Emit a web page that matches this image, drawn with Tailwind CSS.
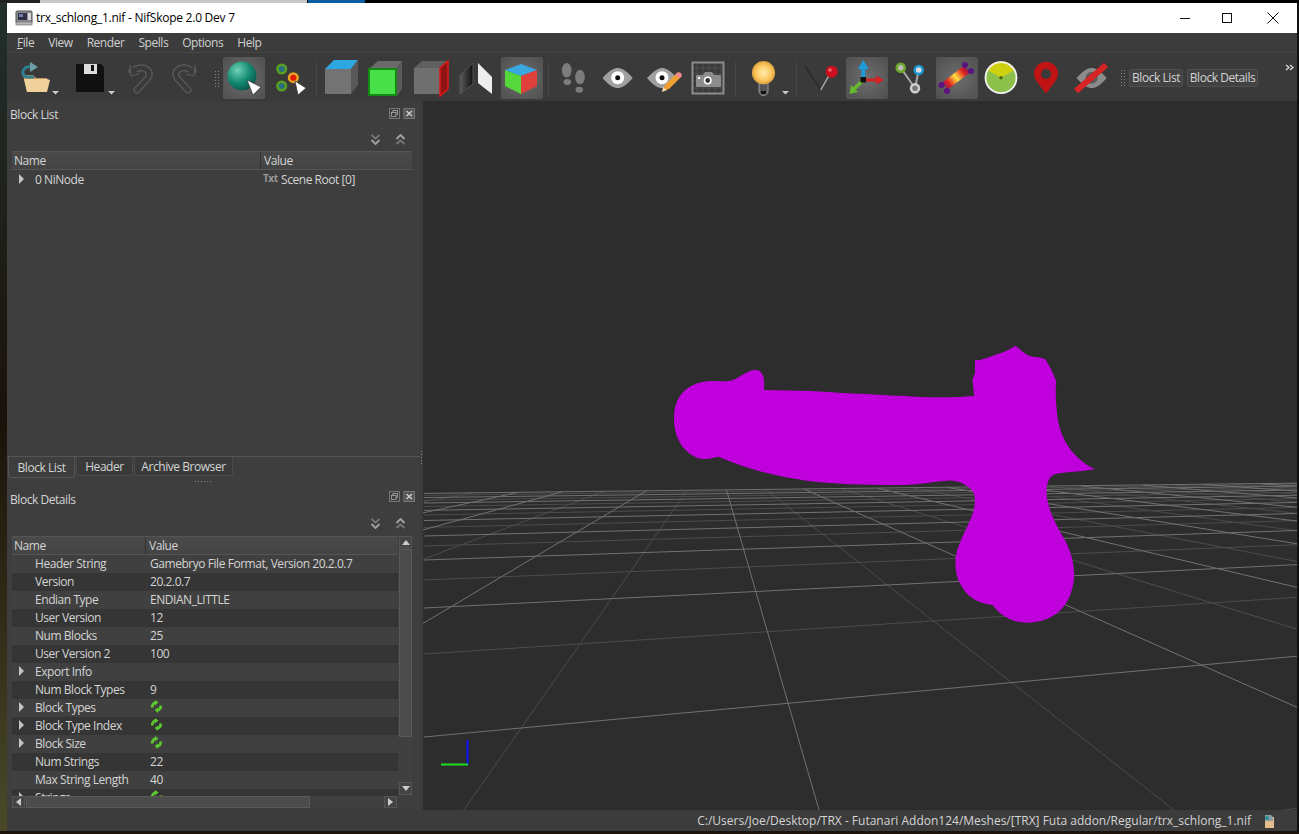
<!DOCTYPE html>
<html>
<head>
<meta charset="utf-8">
<script src="https://cdn.jsdelivr.net/npm/@tailwindcss/browser@4"></script>
</head>
<body class="m-0 bg-black">
<div class="w-[1299px] h-[834px] overflow-hidden flex flex-col font-['Open_Sans','Noto_Sans',sans-serif] text-[12px] tracking-[-0.45px] text-[#d4d4d4] bg-black">
  <div class="h-[3px] flex shrink-0 bg-black">
    <div class="w-[40px] bg-[#222]"></div><div class="w-[267px] bg-[#c8c8c8]"></div><div class="w-[57px] ml-px bg-[#0b5da3]"></div>
  </div>
  <div class="flex flex-1 min-h-0">
    <div class="w-[7px] bg-gradient-to-b from-[#22302c] via-[#1a120a] to-[#4a4a28]"></div>
    <div class="w-[1290px] flex flex-col bg-[#3c3c3c]">
      <!-- title bar -->
      <div class="h-[30px] bg-white flex items-center text-black shrink-0">
        <svg class="ml-[8px] w-[18px] h-[16px]" viewBox="0 0 18 16"><rect x="1" y="1" width="16" height="12" rx="1" fill="#8c8c94" stroke="#555"/><rect x="3" y="3" width="9" height="7" fill="#2e3142"/><rect x="13" y="3" width="3" height="7" fill="#d8d8d8"/><rect x="1" y="12" width="16" height="3" fill="#b8b8bc" stroke="#666" stroke-width=".6"/><rect x="4" y="4" width="4" height="3" fill="#6f80b0"/></svg>
        <span class="ml-[3px] text-[12px] tracking-[-0.25px]">trx_schlong_1.nif - NifSkope 2.0 Dev 7</span>
        <svg class="ml-auto w-[14px] h-[14px] mr-[32px]" viewBox="0 0 14 14"><path d="M2 7.500h10" stroke="#111"/></svg>
        <svg class="w-[14px] h-[14px] mr-[32px] -ml-[4px]" viewBox="0 0 14 14"><rect x="2.500" y="2.500" width="9" height="9" fill="none" stroke="#111"/></svg>
        <svg class="w-[14px] h-[14px] mr-[17px]" viewBox="0 0 14 14"><path d="M1.500 1.500l11 11M12.500 1.500l-11 11" stroke="#111"/></svg>
      </div>
      <!-- menu -->
      <div class="h-[19px] flex items-center shrink-0 pl-[10px] gap-[14px] bg-[#3c3c3c] text-[#d0d0d0]">
        <span><span class="underline">F</span>ile</span><span>View</span><span>Render</span><span>Spells</span><span>Options</span><span>Help</span>
      </div>
      <!-- toolbar -->
      <div class="relative h-[49px] shrink-0 flex items-start pt-[4px] bg-[#3a3a3a] border-t border-[#444]">
        <div class="relative w-[42px] h-[42px] ml-[8px]">
          <svg width="42" height="42" viewBox="0 0 42 42"><path d="M8 18h10l3 3h11v14H12z" fill="#c99a58"/><path d="M9 22h23l3 1-3 12H12z" fill="#f0d19c"/><path d="M19 12a6.500 6.500 0 0 0-11 2 5.500 5.500 0 0 0 3 6h8" fill="none" stroke="#2f8090" stroke-width="3"/><path d="M15 5l8 5-8 5z" fill="#6fa0a8"/></svg>
          <svg class="absolute left-[37px] top-[34px]" width="8" height="5"><path d="M0 0h7l-3.500 3.500z" fill="#ccc"/></svg>
        </div>
        <div class="relative w-[42px] h-[42px] ml-[12px]">
          <svg width="42" height="42" viewBox="0 0 42 42"><path d="M7 7h25l3 3v25H7z" fill="#111"/><rect x="15" y="7" width="13" height="10" fill="#ddd"/><rect x="22" y="8" width="3" height="6" fill="#111"/></svg>
          <svg class="absolute left-[39px] top-[34px]" width="8" height="5"><path d="M0 0h7l-3.500 3.500z" fill="#ccc"/></svg>
        </div>
        <svg class="ml-[9px]" width="42" height="42" viewBox="0 0 42 42"><path d="M17 33L28 21C32 14 25 10 19 11L12 14" fill="none" stroke="#5c5c5c" stroke-width="7" stroke-linecap="round"/><path d="M17 33L28 21C32 14 25 10 19 11L12 14" fill="none" stroke="#3a3a3a" stroke-width="4.500" stroke-linecap="round"/><path d="M10 8l1 11 8-2" fill="#3a3a3a" stroke="#5c5c5c"/></svg>
        <svg class="ml-[1px]" width="42" height="42" viewBox="0 0 42 42"><path d="M25 33L14 21C10 14 17 10 23 11L30 14" fill="none" stroke="#5c5c5c" stroke-width="7" stroke-linecap="round"/><path d="M25 33L14 21C10 14 17 10 23 11L30 14" fill="none" stroke="#3a3a3a" stroke-width="4.500" stroke-linecap="round"/><path d="M32 8l-1 11-8-2" fill="#3a3a3a" stroke="#5c5c5c"/></svg>
        <div class="ml-[9px] mt-[13px] w-[6px] h-[17px] bg-[radial-gradient(circle,#888_1px,transparent_1px)] bg-[length:3px_3px]"></div>
        <div class="ml-[3px] w-[42px] h-[42px] rounded-[2px] bg-[radial-gradient(circle,#6e6e6e,#505050)] border border-[#555]">
          <svg class="-m-px" width="42" height="42" viewBox="0 0 42 42"><defs><radialGradient id="sp" cx=".35" cy=".3" r=".8"><stop offset="0" stop-color="#6fd0b5"/><stop offset=".55" stop-color="#12896f"/><stop offset="1" stop-color="#0b4d45"/></radialGradient></defs><circle cx="19" cy="19" r="14.500" fill="url(#sp)"/><path d="M24 23l14 7-8 8z" fill="#fff" stroke="#333" stroke-width=".7"/></svg>
        </div>
        <svg class="ml-[4px]" width="42" height="42" viewBox="0 0 42 42"><circle cx="12.700" cy="12" r="4.300" fill="#2c6f7c" stroke="#5aa020" stroke-width="2.500"/><circle cx="12.700" cy="29" r="4.300" fill="#2c6f7c" stroke="#5aa020" stroke-width="2.500"/><circle cx="24.300" cy="20.700" r="4.300" fill="#e01a00" stroke="#e8a020" stroke-width="2.500"/><path d="M26 24l11 7-8 7z" fill="#fff" stroke="#333" stroke-width=".7"/></svg>
        <div class="ml-[5px] mt-[5px] w-px h-[34px] bg-[#484848]"></div>
        <svg class="ml-[3px]" width="42" height="42" viewBox="0 0 42 42"><path d="M5 12h26v25H5z" fill="#737373"/><path d="M5 12l9-9h24l-7 9z" fill="#2ea6e2"/><path d="M31 12l7-9v25l-7 9z" fill="#585858"/></svg>
        <svg class="ml-[2px]" width="42" height="42" viewBox="0 0 42 42"><path d="M6 11l8-7h24l-5 7z" fill="#6a6a6a"/><path d="M33 11l5-7v28l-5 7z" fill="#5a5a5a"/><rect x="5" y="12" width="27" height="26" fill="#48e048" stroke="#148a14" stroke-width="2"/></svg>
        <svg class="ml-[4px]" width="42" height="42" viewBox="0 0 42 42"><path d="M4 11h26v26H4z" fill="#6f6f6f"/><path d="M4 11l8-7h26l-8 7z" fill="#5f5f5f"/><path d="M30 11l8-7v28l-8 7z" fill="#8f1515" stroke="#e01818" stroke-width="1.500"/></svg>
        <svg class="ml-[2px]" width="42" height="42" viewBox="0 0 42 42"><defs><linearGradient id="hf" x1="0" x2="1" y1="0" y2="0"><stop offset="0" stop-color="#5a5a5a"/><stop offset="1" stop-color="#111"/></linearGradient></defs><path d="M6 18L19 6v21L6 37z" fill="url(#hf)" stroke="#555"/><path d="M24 6l14 14v17L24 26z" fill="#eee"/></svg>
        <div class="ml-[5px] w-[42px] h-[42px] rounded-[2px] bg-[radial-gradient(circle,#6e6e6e,#505050)] border border-[#555]">
          <svg class="-m-px" width="42" height="42" viewBox="0 0 42 42"><path d="M4 13l16-6 16 6-16 6z" fill="#3aa8e0"/><path d="M4 13l16 6v18L4 29z" fill="#55d83a"/><path d="M20 19l16-6v16l-16 8z" fill="#e0403c"/></svg>
        </div>
        <div class="ml-[5px] mt-[5px] w-px h-[34px] bg-[#484848]"></div>
        <svg class="ml-[3px]" width="42" height="42" viewBox="0 0 42 42"><g fill="#7c7c7c"><ellipse cx="14.700" cy="13.300" rx="4.800" ry="7.300"/><ellipse cx="15.300" cy="25" rx="3.800" ry="3"/><ellipse cx="28" cy="20" rx="4.800" ry="7.300"/><ellipse cx="27.300" cy="32.700" rx="3.800" ry="3"/></g></svg>
        <svg class="ml-[3px]" width="42" height="42" viewBox="0 0 42 42"><path d="M5.500 21C13 13 17 11 20.700 11s8 2 15 10c-7 8-11 10-15 10s-8-2-15.200-10z" fill="#a0a0a0"/><circle cx="20.700" cy="20.700" r="6.500" fill="#fff"/><circle cx="20.700" cy="20.700" r="2.500" fill="#111"/></svg>
        <svg class="ml-[4px]" width="42" height="42" viewBox="0 0 42 42"><path d="M4 21C12 13 16 11 19 11s8 2 15 10c-7 8-11 10-15 10s-8-2-15-10z" fill="#a0a0a0"/><circle cx="19" cy="20.700" r="6.500" fill="#fff"/><circle cx="19" cy="20.700" r="2.500" fill="#111"/><path d="M20 34l2-6 12-12 4 4-12 12z" fill="#f0a030"/><path d="M32 18l2-2 1-1 3 1 1 3-1 1-2 1z" fill="#f08890"/><path d="M19 35l1-5 4 3z" fill="#f7d9a8"/></svg>
        <svg class="ml-[2px]" width="42" height="42" viewBox="0 0 42 42"><path d="M10 6v30M16 6v30M22 6v30M28 6v30M34 6v30M6 11h30M6 17h30M6 24h30M6 31h30" stroke="#4e4e4e"/><rect x="5.500" y="5.500" width="31" height="31" fill="none" stroke="#8c8c8c" stroke-width="2"/><rect x="9" y="18" width="25" height="12" rx="1" fill="#8c8c8c"/><path d="M16 18l2-3h7l2 3z" fill="#8c8c8c"/><circle cx="20.700" cy="23.500" r="3.200" fill="#333" stroke="#fff" stroke-width="1.600"/><rect x="11" y="20" width="2" height="2" fill="#fff"/></svg>
        <div class="ml-[6px] mt-[5px] w-px h-[34px] bg-[#484848]"></div>
        <div class="relative ml-[7px] w-[42px] h-[42px]">
          <svg width="42" height="42" viewBox="0 0 42 42"><defs><radialGradient id="bb"><stop offset="0" stop-color="#ffedb0"/><stop offset=".7" stop-color="#fbc45a"/><stop offset="1" stop-color="#d9a040"/></radialGradient></defs><path d="M16 26h9v8a4.500 4.500 0 0 1-9 0z" fill="#555" stroke="#9a9a9a"/><rect x="18" y="34" width="5" height="3" fill="#111"/><circle cx="20.500" cy="15.700" r="11.600" fill="url(#bb)"/></svg>
          <svg class="absolute left-[39px] top-[34px]" width="8" height="5"><path d="M0 0h7l-3.500 3.500z" fill="#ccc"/></svg>
        </div>
        <div class="ml-[11px] mt-[5px] w-px h-[34px] bg-[#484848]"></div>
        <svg class="ml-[4px]" width="42" height="42" viewBox="0 0 42 42"><path d="M4 9l15.700 24" stroke="#2a2a2a" stroke-width="1.400" fill="none"/><path d="M19.700 33L30 15" stroke="#aaa" stroke-width="1.500" fill="none"/><circle cx="30.700" cy="14.700" r="6" fill="#cc1020"/><circle cx="29" cy="13" r="1.800" fill="#ef6a70"/></svg>
        <div class="ml-[3px] w-[42px] h-[42px] rounded-[2px] bg-[radial-gradient(circle,#6e6e6e,#505050)] border border-[#555]">
          <svg class="-m-px" width="42" height="42" viewBox="0 0 42 42"><path d="M17.300 23L8 32" stroke="#66b82e" stroke-width="3.500"/><path d="M3.500 37l1.500-9 7 7z" fill="#66b82e"/><path d="M17.300 23H32" stroke="#d42020" stroke-width="3"/><path d="M38 23l-8 4.500v-9z" fill="#d42020"/><path d="M17.300 23V10" stroke="#1d9bd8" stroke-width="4"/><path d="M17.300 3l5.500 9H11.800z" fill="#1d9bd8"/><rect x="14.500" y="20" width="5.500" height="5.500" fill="#111"/></svg>
        </div>
        <svg class="ml-[1px]" width="42" height="42" viewBox="0 0 42 42"><path d="M11.700 10.700L26 31.300M29.700 13L26 31.300" stroke="#a8a8a8" stroke-width="2"/><circle cx="11.700" cy="10.700" r="4" fill="#bbb" stroke="#6ca828" stroke-width="2.500"/><circle cx="29.700" cy="13" r="4" fill="#ddd" stroke="#1b98d5" stroke-width="2.500"/><circle cx="26" cy="31.300" r="4" fill="#777" stroke="#cfcfcf" stroke-width="2.500"/></svg>
        <div class="ml-[5px] w-[42px] h-[42px] rounded-[2px] bg-[radial-gradient(circle,#6e6e6e,#505050)] border border-[#555]">
          <svg class="-m-px" width="42" height="42" viewBox="0 0 42 42"><defs><linearGradient id="ht" gradientUnits="userSpaceOnUse" x1="6" y1="32" x2="34" y2="9"><stop offset="0" stop-color="#5a1480"/><stop offset=".25" stop-color="#e02020"/><stop offset=".5" stop-color="#ffe040"/><stop offset=".75" stop-color="#e02020"/><stop offset="1" stop-color="#5a1480"/></linearGradient></defs><path d="M9 29L31 12" stroke="url(#ht)" stroke-width="9"/><circle cx="5.500" cy="28" r="3" fill="#5a1480"/><circle cx="11" cy="34" r="3" fill="#5a1480"/><circle cx="29" cy="8" r="3" fill="#5a1480"/><circle cx="35" cy="14" r="3" fill="#5a1480"/></svg>
        </div>
        <svg class="ml-[2px]" width="42" height="42" viewBox="0 0 42 42"><circle cx="21" cy="20.700" r="15.500" fill="#8cc04a"/><path d="M21 20.700L7.500 13A15.500 15.500 0 0 1 34.500 13z" fill="#cfd010"/><path d="M7.500 13A15.500 15.500 0 0 1 34.500 13" fill="none" stroke="#e8a020" stroke-width="1.500"/><circle cx="21" cy="20.700" r="1.800" fill="#4c6a10"/><circle cx="21" cy="20.700" r="15.500" fill="none" stroke="#f2f2f2" stroke-width="1.800"/></svg>
        <svg class="ml-[3px]" width="42" height="42" viewBox="0 0 42 42"><path fill-rule="evenodd" d="M21 36.700C14 27 9 22.500 9 16.700a12 12 0 0 1 24 0C33 22.500 28 27 21 36.700zM21 12a5 5 0 1 0 0 10 5 5 0 0 0 0-10z" fill="#c01414"/></svg>
        <svg class="ml-[3px]" width="42" height="42" viewBox="0 0 42 42"><path d="M6.500 21C14 13 18 11 21.700 11s8 2 15 10c-7 8-11 10-15 10s-8-2-15.200-10z" fill="#8c8c8c"/><circle cx="21.700" cy="20.700" r="6" fill="#5c5c5c"/><path d="M6 34L36 8" stroke="#d62424" stroke-width="6"/></svg>
        <div class="ml-[8px] mt-[12px] w-[5px] h-[18px] bg-[radial-gradient(circle,#888_1px,transparent_1px)] bg-[length:3px_3px]"></div>
        <div class="ml-[4px] mt-[12px] w-[54px] h-[18px] rounded-[2px] border border-[#505050] bg-[#424242] flex items-center justify-center">Block List</div>
        <div class="ml-[4px] mt-[12px] w-[71px] h-[18px] rounded-[2px] border border-[#505050] bg-[#424242] flex items-center justify-center">Block Details</div>
        <svg class="absolute left-[1278px] top-[11px]" width="9" height="7" viewBox="0 0 9 7"><path d="M1 1l3 2.500L1 6M5 1l3 2.500L5 6" fill="none" stroke="#ddd" stroke-width="1.300"/></svg>
      </div>
      <!-- main -->
      <div class="flex flex-1 min-h-0">
        <div class="w-[413px] flex flex-col bg-[#3e3e3e] shrink-0">
          <!-- Block list dock -->
          <div class="h-[26px] flex items-center pl-[3px] pt-[1px] shrink-0">
            <span class="mt-px">Block List</span>
            <svg class="ml-auto mr-[5px] -mt-[2px]" width="26" height="11" viewBox="0 0 26 11"><rect x=".5" y=".5" width="10" height="10" fill="none" stroke="#777"/><rect x="4" y="2.500" width="4.500" height="4" fill="none" stroke="#aaa" stroke-width=".8"/><rect x="2.500" y="4.500" width="4.500" height="4" fill="#3e3e3e" stroke="#aaa" stroke-width=".8"/><rect x="15" y=".5" width="10.500" height="10" fill="#555" stroke="#777"/><path d="M17.500 3l5.500 5M23 3l-5.500 5" stroke="#ccc" stroke-width="1.500"/></svg>
          </div>
          <div class="h-[24px] flex items-center justify-end pr-[14px] gap-[14px] shrink-0">
            <svg width="11" height="13" viewBox="0 0 11 13"><path d="M1.500 2l4 3.500 4-3.500" fill="none" stroke="#777" stroke-width="1.800"/><path d="M1.500 7l4 4 4-4" fill="none" stroke="#a4a4a4" stroke-width="1.800"/></svg>
            <svg width="11" height="13" viewBox="0 0 11 13"><path d="M1.500 6l4-4 4 4" fill="none" stroke="#a4a4a4" stroke-width="1.800"/><path d="M1.500 11l4-3.500 4 3.500" fill="none" stroke="#777" stroke-width="1.800"/></svg>
          </div>
          <div class="ml-[5px] mr-[8px] h-[19px] flex shrink-0 bg-gradient-to-b from-[#4a4a4a] to-[#444] border-y border-[#555] items-center">
            <div class="w-[249px] pl-[2px] border-r border-[#333] h-full flex items-center">Name</div>
            <div class="pl-[3px]">Value</div>
          </div>
          <div class="ml-[5px] mr-[8px] h-[286px] shrink-0 pt-[1px]">
            <div class="h-[18px] flex items-center">
              <svg class="ml-[7px] w-[16px] h-[12px] shrink-0 -mt-[2px]" viewBox="0 0 16 12"><path d="M0 1l5 5-5 5z" fill="#c4c4c4"/></svg>
              <div class="w-[226px] shrink-0">0 NiNode</div>
              <div class="pl-[2px] flex items-center"><span class="text-[10px] font-bold leading-[10px] text-[#999] -mt-[4px] w-[18px]">Txt</span>Scene Root [0]</div>
            </div>
          </div>
          <!-- tabs -->
          <div class="h-[22px] shrink-0 flex pl-[1px] border-t border-[#555]">
            <div class="w-[67px] h-[21px] pt-[1px] flex items-center justify-center bg-[#3e3e3e] border-x border-b border-[#555] rounded-b-[3px]">Block List</div>
            <div class="ml-px w-[57px] h-[19px] pt-[1px] flex items-center justify-center border-x border-b border-[#4a4a4a] bg-[#3a3a3a] rounded-b-[3px]">Header</div>
            <div class="ml-px w-[99px] h-[19px] pt-[1px] flex items-center justify-center border-x border-b border-[#4a4a4a] bg-[#3a3a3a] rounded-b-[3px]">Archive Browser</div>
          </div>
          <div class="h-[7px] shrink-0 flex items-center justify-center pr-[21px]"><div class="w-[18px] h-[3px] bg-[radial-gradient(circle,#888_1px,transparent_1px)] bg-[length:3px_3px]"></div></div>
          <!-- Block details dock -->
          <div class="h-[26px] flex items-center pl-[3px] shrink-0">
            <span class="mt-[3px]">Block Details</span>
            <svg class="ml-auto mr-[5px] -mt-[4px]" width="26" height="11" viewBox="0 0 26 11"><rect x=".5" y=".5" width="10" height="10" fill="none" stroke="#777"/><rect x="4" y="2.500" width="4.500" height="4" fill="none" stroke="#aaa" stroke-width=".8"/><rect x="2.500" y="4.500" width="4.500" height="4" fill="#3e3e3e" stroke="#aaa" stroke-width=".8"/><rect x="15" y=".5" width="10.500" height="10" fill="#555" stroke="#777"/><path d="M17.500 3l5.500 5M23 3l-5.500 5" stroke="#ccc" stroke-width="1.500"/></svg>
          </div>
          <div class="h-[25px] flex items-center justify-end pr-[14px] gap-[14px] shrink-0">
            <svg width="11" height="13" viewBox="0 0 11 13"><path d="M1.500 2l4 3.500 4-3.500" fill="none" stroke="#777" stroke-width="1.800"/><path d="M1.500 7l4 4 4-4" fill="none" stroke="#a4a4a4" stroke-width="1.800"/></svg>
            <svg width="11" height="13" viewBox="0 0 11 13"><path d="M1.500 6l4-4 4 4" fill="none" stroke="#a4a4a4" stroke-width="1.800"/><path d="M1.500 11l4-3.500 4 3.500" fill="none" stroke="#777" stroke-width="1.800"/></svg>
          </div>
          <div class="ml-[5px] mr-[8px] flex h-[272px] shrink-0">
            <div class="w-[386px] flex flex-col shrink-0">
              <div class="h-[19px] shrink-0 flex bg-gradient-to-b from-[#4a4a4a] to-[#444] border-y border-[#555] items-center">
                <div class="w-[134px] pl-[2px] border-r border-[#333] h-full flex items-center">Name</div>
                <div class="pl-[3px]">Value</div>
              </div>
              <div class="h-[241px] overflow-hidden">
                <div class="h-[18px] flex items-center bg-[#404040]"><div class="w-[138px] pl-[23px]">Header String</div><div>Gamebryo File Format, Version 20.2.0.7</div></div>
                <div class="h-[18px] flex items-center bg-[#353535]"><div class="w-[138px] pl-[23px]">Version</div><div>20.2.0.7</div></div>
                <div class="h-[18px] flex items-center bg-[#404040]"><div class="w-[138px] pl-[23px]">Endian Type</div><div>ENDIAN_LITTLE</div></div>
                <div class="h-[18px] flex items-center bg-[#353535]"><div class="w-[138px] pl-[23px]">User Version</div><div>12</div></div>
                <div class="h-[18px] flex items-center bg-[#404040]"><div class="w-[138px] pl-[23px]">Num Blocks</div><div>25</div></div>
                <div class="h-[18px] flex items-center bg-[#353535]"><div class="w-[138px] pl-[23px]">User Version 2</div><div>100</div></div>
                <div class="h-[18px] flex items-center bg-[#404040]"><svg class="ml-[7px] w-[16px] h-[12px] shrink-0 -mt-[2px]" viewBox="0 0 16 12"><path d="M0 1l5 5-5 5z" fill="#c4c4c4"/></svg><div class="w-[115px]">Export Info</div></div>
                <div class="h-[18px] flex items-center bg-[#353535]"><div class="w-[138px] pl-[23px]">Num Block Types</div><div>9</div></div>
                <div class="h-[18px] flex items-center bg-[#404040]"><svg class="ml-[7px] w-[16px] h-[12px] shrink-0 -mt-[2px]" viewBox="0 0 16 12"><path d="M0 1l5 5-5 5z" fill="#c4c4c4"/></svg><div class="w-[115px]">Block Types</div><svg class="-mt-[3px]" width="13" height="13" viewBox="0 0 13 13"><path d="M6 2.500A4 4 0 0 0 2.500 7.500M7 10.500a4 4 0 0 0 3.500-5" fill="none" stroke="#5cc72e" stroke-width="2.800"/><path d="M5 0l3.500 2.500L5 5.500zM8 7.500l-3.500 2.500L8 13z" fill="#5cc72e"/></svg></div>
                <div class="h-[18px] flex items-center bg-[#353535]"><svg class="ml-[7px] w-[16px] h-[12px] shrink-0 -mt-[2px]" viewBox="0 0 16 12"><path d="M0 1l5 5-5 5z" fill="#c4c4c4"/></svg><div class="w-[115px]">Block Type Index</div><svg class="-mt-[3px]" width="13" height="13" viewBox="0 0 13 13"><path d="M6 2.500A4 4 0 0 0 2.500 7.500M7 10.500a4 4 0 0 0 3.500-5" fill="none" stroke="#5cc72e" stroke-width="2.800"/><path d="M5 0l3.500 2.500L5 5.500zM8 7.500l-3.500 2.500L8 13z" fill="#5cc72e"/></svg></div>
                <div class="h-[18px] flex items-center bg-[#404040]"><svg class="ml-[7px] w-[16px] h-[12px] shrink-0 -mt-[2px]" viewBox="0 0 16 12"><path d="M0 1l5 5-5 5z" fill="#c4c4c4"/></svg><div class="w-[115px]">Block Size</div><svg class="-mt-[3px]" width="13" height="13" viewBox="0 0 13 13"><path d="M6 2.500A4 4 0 0 0 2.500 7.500M7 10.500a4 4 0 0 0 3.500-5" fill="none" stroke="#5cc72e" stroke-width="2.800"/><path d="M5 0l3.500 2.500L5 5.500zM8 7.500l-3.500 2.500L8 13z" fill="#5cc72e"/></svg></div>
                <div class="h-[18px] flex items-center bg-[#353535]"><div class="w-[138px] pl-[23px]">Num Strings</div><div>22</div></div>
                <div class="h-[18px] flex items-center bg-[#404040]"><div class="w-[138px] pl-[23px]">Max String Length</div><div>40</div></div>
                <div class="h-[18px] flex items-center bg-[#353535]"><svg class="ml-[7px] w-[16px] h-[12px] shrink-0 -mt-[2px]" viewBox="0 0 16 12"><path d="M0 1l5 5-5 5z" fill="#c4c4c4"/></svg><div class="w-[115px]">Strings</div><svg class="-mt-[3px]" width="13" height="13" viewBox="0 0 13 13"><path d="M6 2.500A4 4 0 0 0 2.500 7.500M7 10.500a4 4 0 0 0 3.500-5" fill="none" stroke="#5cc72e" stroke-width="2.800"/><path d="M5 0l3.500 2.500L5 5.500zM8 7.500l-3.500 2.500L8 13z" fill="#5cc72e"/></svg></div>
              </div>
              <!-- h scroll -->
              <div class="h-[12px] flex shrink-0">
                <div class="w-[13px] border border-[#555] bg-[#444] flex items-center justify-center"><svg width="6" height="8"><path d="M5 0v8L0 4z" fill="#ccc"/></svg></div>
                <div class="ml-px w-[284px] bg-[#4c4c4c] border border-[#5a5a5a]"></div>
                <div class="w-[74px] bg-[#404040]"></div>
                <div class="w-[13px] border border-[#555] bg-[#444] flex items-center justify-center"><svg width="6" height="8"><path d="M0 0v8l5-4z" fill="#ccc"/></svg></div>
              </div>
            </div>
            <!-- v scroll -->
            <div class="ml-[1px] w-[13px] h-[259px] flex flex-col bg-[#404040] shrink-0">
              <div class="h-[12px] border border-[#555] bg-[#444] flex items-center justify-center"><svg width="8" height="5"><path d="M0 5h8L4 0z" fill="#ccc"/></svg></div>
              <div class="mt-px h-[188px] bg-[#4c4c4c] border border-[#5a5a5a]"></div>
              <div class="mt-auto h-[13px] border border-[#555] bg-[#444] flex items-center justify-center"><svg width="8" height="5"><path d="M0 0h8L4 5z" fill="#ccc"/></svg></div>
            </div>
          </div>
        </div>
        <!-- splitter -->
        <div class="w-[3px] shrink-0 flex flex-col pt-[349px] items-start bg-[#3c3c3c]"><div class="w-[3px] h-[16px] bg-[radial-gradient(circle,#888_1px,transparent_1px)] bg-[length:3px_3px]"></div></div>
        <!-- viewport -->
        <div class="flex-1 min-w-0 bg-[#2d2d2d] overflow-hidden">
          <svg class="block" width="874" height="709" viewBox="423 101 874 709">
            <g stroke="#4c4c4c" stroke-width="1" fill="none">
              <path d="M424 950.700L1299 807.700M424 654L1299 597.200M424 580L1299 544.600M424 546L1299 520.500M424 527.400L1299 507.300M424 515L1299 498.500M424 506.500L1299 492.400M424 500.200L1299 488M424 495.400L1299 484.600"/>
              <path d="M473 492.900L-1311 810M604 491.400L-246 810M687 490.500L464 810M766 489.600L1174 810M841 488.700L1884 810M913 487.900L2594 810M982 487.100L3304 810M1049 486.300L4014 810M1112 485.600L4724 810M1174 484.900L5434 810M1233 484.200L6144 810M1289 483.600L6854 810"/>
            </g>
            <g stroke="#727272" stroke-width="1" fill="none">
              <path d="M424 737L1299 656M424 608L1299 564.500M424 560L1299 530.400M424 536L1299 513.400M424 520.500L1299 502.400M424 510.400L1299 495.200M424 503L1299 490M424 497.600L1299 486.100M424 493.400L1299 483.100"/>
              <path d="M518 492.400L-956 810M562 491.900L-601 810M646 490.900L109 810M726.500 490L819 810M804 489.100L1529 810M878 488.300L2239 810M948 487.500L2949 810M1016 486.700L3659 810M1081 486L4369 810M1143 485.200L5079 810M1204 484.500L5789 810M1261 483.900L6499 810"/>
            </g>
            <path transform="translate(650 330) scale(.33333)" fill="#c000dc" d="M72 265C72 190 120 155 185 153C215 152 235 158 255 148C275 138 295 118 318 120C338 122 345 140 342 180L480 183C600 190 700 195 800 200C870 203 920 202 972 198L970 170L967 150L975 130L975 90C985 92 1000 88 1020 80C1050 70 1075 62 1097 47C1115 62 1130 78 1150 80C1165 82 1175 82 1186 88C1200 110 1210 130 1219 155C1215 180 1218 220 1222 260C1232 330 1270 385 1335 418C1290 425 1250 425 1215 433C1195 440 1188 465 1190 495C1195 540 1215 580 1245 630C1265 670 1275 710 1272 745C1265 830 1210 878 1130 878C1085 878 1050 855 1028 825C1000 822 970 812 950 790C925 760 913 730 917 680C925 635 955 590 970 545C978 515 975 490 965 480C945 462 925 450 890 452C850 455 810 465 740 465C640 465 550 462 470 452C380 440 300 420 205 380C185 385 165 390 145 385C105 370 72 330 72 265Z"/>
            <path d="M467.500 740V765" stroke="#1010ff" stroke-width="2"/>
            <path d="M441 764.500H468" stroke="#1ee01e" stroke-width="2"/>
          </svg>
        </div>
      </div>
      <!-- status -->
      <div class="h-[21px] shrink-0 bg-[#3c3c3c] flex items-center justify-end pr-[20px] pt-[1px]">
        <span class="tracking-[0px]">C:/Users/Joe/Desktop/TRX - Futanari Addon124/Meshes/[TRX] Futa addon/Regular/trx_schlong_1.nif</span>
        <svg class="ml-[11px]" width="15" height="15" viewBox="0 0 15 15"><path d="M3 3h9v11H3z" fill="#e4bb8a"/><path d="M3 1h6l2 2v4H3z" fill="#8aa0a8"/><circle cx="5" cy="4" r="2" fill="#2f8d97"/></svg>
      </div>
    </div>
    <div class="w-[2px] bg-[#111]"></div>
  </div>
  <div class="h-[3px] shrink-0 bg-[#1c140c]"></div>
</div>
</body>
</html>
